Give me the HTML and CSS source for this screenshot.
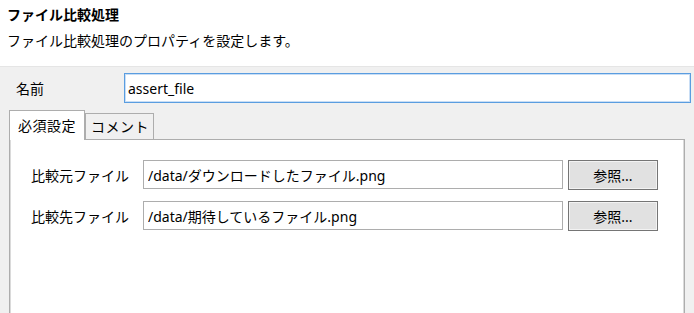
FILE: index.html
```html
<!DOCTYPE html>
<html lang="ja">
<head>
  <meta charset="UTF-8">
  <title>ファイル比較処理</title>
  <link rel="stylesheet" href="styles.css">
</head>
<body>

  <div class="header">
    <div class="title">ファイル比較処理</div>
    <div class="desc">ファイル比較処理のプロパティを設定します。</div>
  </div>

  <div class="form">
    <div class="name-row">
      <label class="name-label">名前</label>
      <input type="text" class="name-input" value="assert_file">
    </div>

    <div class="tabs">
      <div class="tab active">必須設定</div>
      <div class="tab">コメント</div>
    </div>

    <div class="panel">
      <div class="row">
        <label class="row-label">比較元ファイル</label>
        <input type="text" class="path" value="/data/ダウンロードしたファイル.png">
        <button class="browse">参照...</button>
      </div>
      <div class="row">
        <label class="row-label">比較先ファイル</label>
        <input type="text" class="path" value="/data/期待しているファイル.png">
        <button class="browse">参照...</button>
      </div>
    </div>
  </div>

</body>
</html>
```

FILE: styles.css
```css
html, body { height: 100%; }
body { margin: 0; background: #f0f0f0; font-family: "Noto Sans CJK JP", sans-serif; font-size: 14px; color: #000; display: flex; flex-direction: column; overflow: hidden; }
input, button { font-family: "Noto Sans", "Noto Sans CJK JP", sans-serif; font-size: 14px; color: #000; }

.header { background: #fff; height: 67px; border-bottom: 1px solid #e5e5e5; padding: 0 7px; box-sizing: border-box; }
.title { font-weight: bold; line-height: 18px; padding-top: 5px; }
.desc { line-height: 18px; margin-top: 8px; }

.form { flex: 1; display: flex; flex-direction: column; }
.name-row { display: flex; align-items: center; margin-top: 6px; padding: 0 3px 0 16px; }
.name-label { width: 108px; }
.name-input { flex: 1; height: 30px; box-sizing: border-box; border: 1px solid #5a9de0; box-shadow: inset 0 0 0 1px #c9def5; padding: 0 3px; outline: none; }

.tabs { display: flex; align-items: flex-end; margin: 7px 0 0 9px; height: 29px; }
.tab { height: 26px; line-height: 25px; padding: 0 4px 0 5px; box-sizing: border-box; border: 1px solid #adadad; border-bottom: none; background: #f0f0f0; letter-spacing: 0.5px; }
.tab.active { height: 30px; line-height: 29px; background: #fff; padding: 0 8px 0 8px; margin-bottom: -1px; position: relative; z-index: 1; }

.panel { flex: 1; margin: 0 9px 0 9px; background: #fff; border: 1px solid #adadad; border-bottom: none; box-shadow: inset 1px 0 0 #dadada, inset -1px 0 0 #dadada; padding: 20px 25px 0 21px; }
.row { display: flex; align-items: center; height: 29px; margin-bottom: 12px; }
.row-label { width: 112px; }
.path { width: 420px; height: 29px; box-sizing: border-box; border: 1px solid #adadad; padding: 0 4px; outline: none; }
.browse { width: 90px; height: 30px; margin-left: 5px; background: #e1e1e1; border: 1px solid #757575; box-shadow: inset 0 0 0 1px #f3f3f3; padding: 0; }
```
